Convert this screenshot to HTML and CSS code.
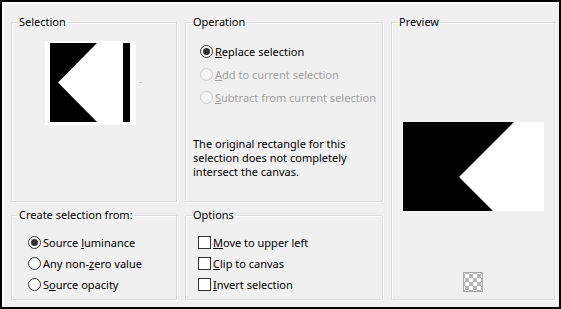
FILE: index.html
```html
<!DOCTYPE html>
<html lang="en">
<head>
    <meta charset="UTF-8">
    <title>Selection From Mask</title>
    <link rel="stylesheet" href="styles.css">
</head>
<body>
    <div class="dialog">
        <div class="layout">
            <fieldset class="group selection">
                <legend>Selection</legend>
                <svg class="thumb" width="100" height="84" viewBox="0 0 100 84">
                    <rect x="0" y="0" width="91" height="84" fill="#fff"/>
                    <rect x="5" y="2" width="80" height="79" fill="#000"/>
                    <polygon points="52,2 78,2 78,81 52,81 13,41.5" fill="#fff"/>
                    <line x1="94" y1="41.5" x2="97" y2="41.5" stroke="#c8c8c8" stroke-width="1"/>
                </svg>
            </fieldset>

            <fieldset class="group operation">
                <legend>Operation</legend>
                <div class="choices">
                    <div class="choice"><span class="radio checked"></span><span><u>R</u>eplace selection</span></div>
                    <div class="choice disabled"><span class="radio"></span><span><u>A</u>dd to current selection</span></div>
                    <div class="choice disabled"><span class="radio"></span><span><u>S</u>ubtract from current selection</span></div>
                </div>
                <p class="note">The original rectangle for this<br>selection does not completely<br>intersect the canvas.</p>
            </fieldset>

            <fieldset class="group preview">
                <legend>Preview</legend>
                <svg class="preview-img" width="141" height="89" viewBox="0 0 141 89">
                    <rect x="0" y="0" width="141" height="89" fill="#000"/>
                    <polygon points="111,0 141,0 141,89 90,89 56,55" fill="#fff"/>
                </svg>
                <span class="checker"></span>
            </fieldset>

            <fieldset class="group source">
                <legend>Create selection from:</legend>
                <div class="choices tight">
                    <div class="choice"><span class="radio checked"></span><span>Source <u>l</u>uminance</span></div>
                    <div class="choice"><span class="radio"></span><span>Any non-<u>z</u>ero value</span></div>
                    <div class="choice"><span class="radio"></span><span>S<u>o</u>urce opacity</span></div>
                </div>
            </fieldset>

            <fieldset class="group options">
                <legend>Options</legend>
                <div class="choices tight">
                    <div class="choice"><span class="check"></span><span><u>M</u>ove to upper left</span></div>
                    <div class="choice"><span class="check"></span><span><u>C</u>lip to canvas</span></div>
                    <div class="choice"><span class="check"></span><span><u>I</u>nvert selection</span></div>
                </div>
            </fieldset>
        </div>
    </div>
</body>
</html>
```

FILE: styles.css
```css
* {
    box-sizing: border-box;
}

body {
    margin: 0;
    font-family: "Noto Sans", "Open Sans", sans-serif;
    font-size: 11px;
    color: #000;
}

.dialog {
    width: 561px;
    height: 309px;
    border: 2px solid #000;
    background-color: #f0f0f0;
    box-shadow: inset 2px 2px 0 #fafafa;
    padding: 12px 0 0 9px;
}

.layout {
    display: grid;
    grid-template-columns: 166px 198px 164px;
    grid-template-rows: 188px 93px;
    column-gap: 8px;
    row-gap: 5px;
}

.group {
    margin: 0;
    padding: 0;
    min-width: 0;
    border: 1px solid #dcdcdc;
    box-shadow: 1px 1px 0 #fff, inset 1px 1px 0 #fff;
}

.group legend {
    margin-left: 6px;
    padding: 0 1px;
    line-height: 16px;
}

.selection .thumb {
    display: block;
    margin: 11px 0 0 33px;
}

.preview {
    grid-column: 3;
    grid-row: 1 / 3;
    display: flex;
    flex-direction: column;
    align-items: center;
}

.preview-img {
    display: block;
    margin-top: 92px;
}

.checker {
    display: block;
    width: 20px;
    height: 20px;
    margin-top: 61px;
    border: 1px solid #a9a9a9;
    background: conic-gradient(#b4b4b4 25%, #fff 0 50%, #b4b4b4 0 75%, #fff 0) 1px 1px / 8px 8px;
}

.source {
    grid-column: 1;
    grid-row: 2;
}

.options {
    grid-column: 2;
    grid-row: 2;
}

.choices {
    display: flex;
    flex-direction: column;
    margin: 10px 0 0 14px;
}

.choice {
    display: flex;
    align-items: center;
    gap: 2px;
    height: 23px;
    white-space: nowrap;
}

.choices.tight {
    margin-top: 9px;
}

.choices.tight .choice {
    height: 21px;
}

.source .choices {
    margin-left: 16px;
}

.options .choices {
    margin-left: 12px;
}

.choice.disabled {
    color: #a0a0a0;
}

.radio {
    width: 13px;
    height: 13px;
    border: 1px solid #333;
    border-radius: 50%;
    background-color: #fff;
    position: relative;
    flex: none;
}

.radio.checked::after {
    content: "";
    position: absolute;
    left: 2px;
    top: 2px;
    width: 7px;
    height: 7px;
    border-radius: 50%;
    background-color: #333;
}

.disabled .radio {
    border-color: #ccc;
    background-color: #f5f5f5;
}

.check {
    width: 13px;
    height: 13px;
    border: 1px solid #333;
    background-color: #fff;
    flex: none;
}

.note {
    margin: 28px 8px 0 7px;
    line-height: 14px;
    white-space: nowrap;
}
```
